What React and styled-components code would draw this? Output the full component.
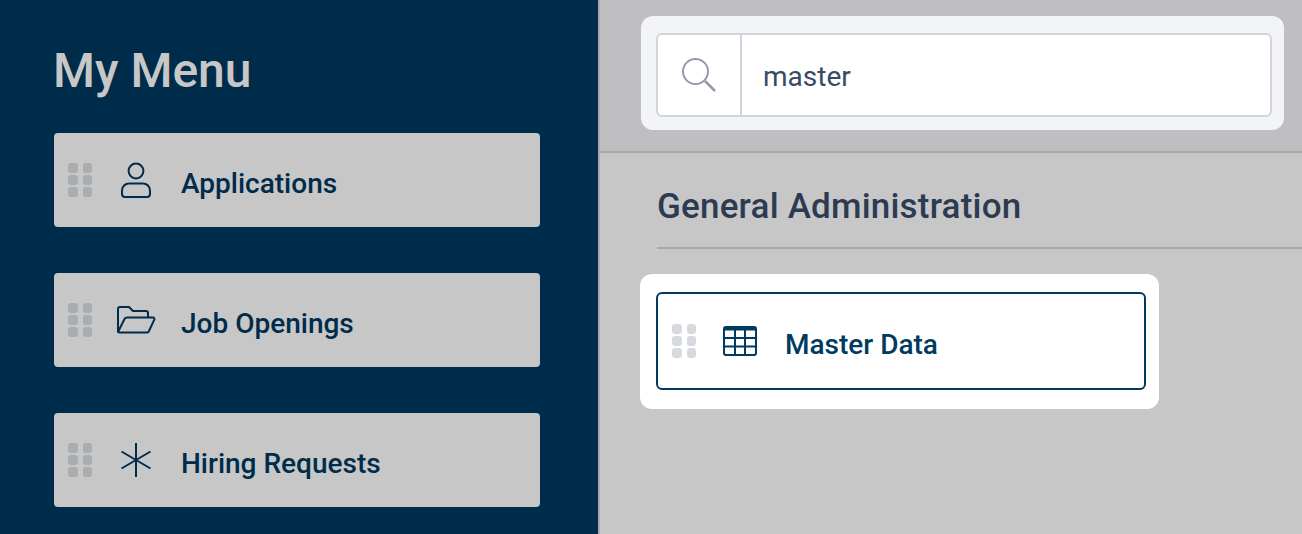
import React from 'react'
import styled, { createGlobalStyle } from 'styled-components'

const GlobalStyle = createGlobalStyle`
  html, body { margin: 0; padding: 0; height: 100%; }
  body { font-family: Roboto, "Liberation Sans", sans-serif; overflow: hidden; }
`

const Page = styled.div`
  display: flex;
  width: 1302px;
  height: 534px;
  overflow: hidden;
  background: #c7c7c7;
`

const Sidebar = styled.aside`
  box-sizing: border-box;
  width: 600px;
  height: 534px;
  flex-shrink: 0;
  background: #002c4c;
  border-right: 2px solid #a9a9a9;
  padding: 39px 58px 0 54px;
`

const MenuTitle = styled.h1`
  margin: 0 0 41px -1px;
  height: 53px;
  line-height: 63px;
  font-family: Roboto, sans-serif;
  font-size: 48px;
  font-weight: 500;
  color: #c7c7c7;
`

const MenuList = styled.div`
  display: flex;
  flex-direction: column;
  gap: 46px;
`

const MenuCard = styled.div`
  box-sizing: border-box;
  display: flex;
  align-items: center;
  height: 94px;
  padding-left: 14px;
  border-radius: 4px;
  background: #c7c7c7;
  color: #002c4c;
`

const Grip = styled.span`
  display: grid;
  grid-template-columns: repeat(2, 9.5px);
  grid-auto-rows: 9.5px;
  gap: 2.5px 5px;
  flex-shrink: 0;

  i {
    display: block;
    border-radius: 3px;
    background: ${p => p.$color};
  }
`

const IconSlot = styled.span`
  display: flex;
  justify-content: center;
  align-items: center;
  width: 40px;
  margin-left: 24px;
  flex-shrink: 0;
`

const Label = styled.span`
  margin-left: 25px;
  padding-top: 6px;
  font-family: Roboto, sans-serif;
  font-size: 28px;
  font-weight: 500;
  white-space: nowrap;
`

const Main = styled.main`
  flex: 1;
  min-width: 0;
`

const SearchBar = styled.div`
  box-sizing: border-box;
  height: 153px;
  padding: 16px 18px 0 41px;
  background: #bfbfc1;
  border-bottom: 2px solid #a9a9ab;
`

const SearchHalo = styled.div`
  box-sizing: border-box;
  height: 114px;
  padding: 17px 12px 13px 15px;
  border-radius: 12px;
  background: #f3f4f6;
`

const SearchBox = styled.div`
  box-sizing: border-box;
  display: flex;
  height: 84px;
  border: 2px solid #d1d5db;
  border-radius: 6px;
  background: #fff;
`

const SearchIcon = styled.span`
  box-sizing: border-box;
  display: flex;
  justify-content: center;
  align-items: center;
  width: 84px;
  border-right: 2px solid #d1d5db;
`

const SearchText = styled.span`
  padding-left: 21px;
  line-height: 84px;
  font-family: Roboto, sans-serif;
  font-size: 28px;
  color: #374b63;
`

const Section = styled.section`
  padding: 28px 0 0 57px;
`

const SectionTitle = styled.h2`
  box-sizing: border-box;
  height: 68px;
  margin: 0 0 25px;
  border-bottom: 2px solid #a9a9ab;
  line-height: 52px;
  font-family: Roboto, sans-serif;
  font-size: 35px;
  font-weight: 500;
  letter-spacing: 0.2px;
  color: #2d3b52;
`

const Spotlight = styled.div`
  box-sizing: border-box;
  width: 519px;
  height: 135px;
  margin-left: -17px;
  padding: 18px 13px 19px 16px;
  border-radius: 12px;
  background: #fff;
`

const ActiveCard = styled(MenuCard)`
  height: 98px;
  padding-left: 14px;
  border: 2px solid #003a5f;
  border-radius: 6px;
  background: #fff;
  color: #003a5f;
`

const GRIP_DOTS = [0, 1, 2, 3, 4, 5]

const DragGrip = ({ color }) => (
  <Grip $color={color}>
    {GRIP_DOTS.map(n => <i key={n} />)}
  </Grip>
)

const UserIcon = () => (
  <svg width="32" height="36" viewBox="0 0 32 36" fill="none" stroke="#002c4c" strokeWidth="2">
    <circle cx="16" cy="9" r="7.4" />
    <path d="M9 21.500h14a7 7 0 0 1 7 7v3.500a3 3 0 0 1-3 3H5a3 3 0 0 1-3-3v-3.500a7 7 0 0 1 7-7z" />
  </svg>
)

const FolderIcon = () => (
  <svg width="40" height="28" viewBox="0 0 40 28" fill="none" stroke="#002c4c" strokeWidth="2" strokeLinejoin="round">
    <path d="M2 25V3a2 2 0 0 1 2-2h9l4 4h13a2 2 0 0 1 2 2v4" />
    <path d="M2 26L8.500 13a3 3 0 0 1 2.500-1.500h26a1.500 1.500 0 0 1 1.300 2.200L33 25a2 2 0 0 1-2 1.500H3.500A1.500 1.500 0 0 1 2 25z" />
  </svg>
)

const AsteriskIcon = () => (
  <svg width="32" height="36" viewBox="0 0 32 36" fill="none" stroke="#002c4c" strokeWidth="2">
    <path d="M16 1v34M1.500 9.500l29 17M30.500 9.500l-29 17" />
  </svg>
)

const TableIcon = () => (
  <svg width="34" height="30" viewBox="0 0 34 30" fill="none" stroke="#003a5f" strokeWidth="2">
    <rect x="1" y="1" width="32" height="28" rx="2" />
    <path d="M1 3h32" strokeWidth="3" />
    <path d="M1 12h32M1 20.500h32M12 4v25M22 4v25" />
  </svg>
)

const MagnifierIcon = () => (
  <svg width="36" height="36" viewBox="0 0 36 36" fill="none" stroke="#929ba7" strokeWidth="2">
    <circle cx="14.500" cy="14.500" r="12.500" />
    <path d="M24 24l10 10" strokeWidth="2.500" />
  </svg>
)

const MENU = [
  { label: 'Applications', icon: <UserIcon /> },
  { label: 'Job Openings', icon: <FolderIcon /> },
  { label: 'Hiring Requests', icon: <AsteriskIcon /> },
]

export default function App() {
  return (
    <Page>
      <GlobalStyle />
      <Sidebar>
        <MenuTitle>My Menu</MenuTitle>
        <MenuList>
          {MENU.map(item => (
            <MenuCard key={item.label}>
              <DragGrip color="#a9adb0" />
              <IconSlot>{item.icon}</IconSlot>
              <Label>{item.label}</Label>
            </MenuCard>
          ))}
        </MenuList>
      </Sidebar>
      <Main>
        <SearchBar>
          <SearchHalo>
            <SearchBox>
              <SearchIcon><MagnifierIcon /></SearchIcon>
              <SearchText>master</SearchText>
            </SearchBox>
          </SearchHalo>
        </SearchBar>
        <Section>
          <SectionTitle>General Administration</SectionTitle>
          <Spotlight>
            <ActiveCard>
              <DragGrip color="#d6dade" />
              <IconSlot>
                <TableIcon />
              </IconSlot>
              <Label>Master Data</Label>
            </ActiveCard>
          </Spotlight>
        </Section>
      </Main>
    </Page>
  )
}
